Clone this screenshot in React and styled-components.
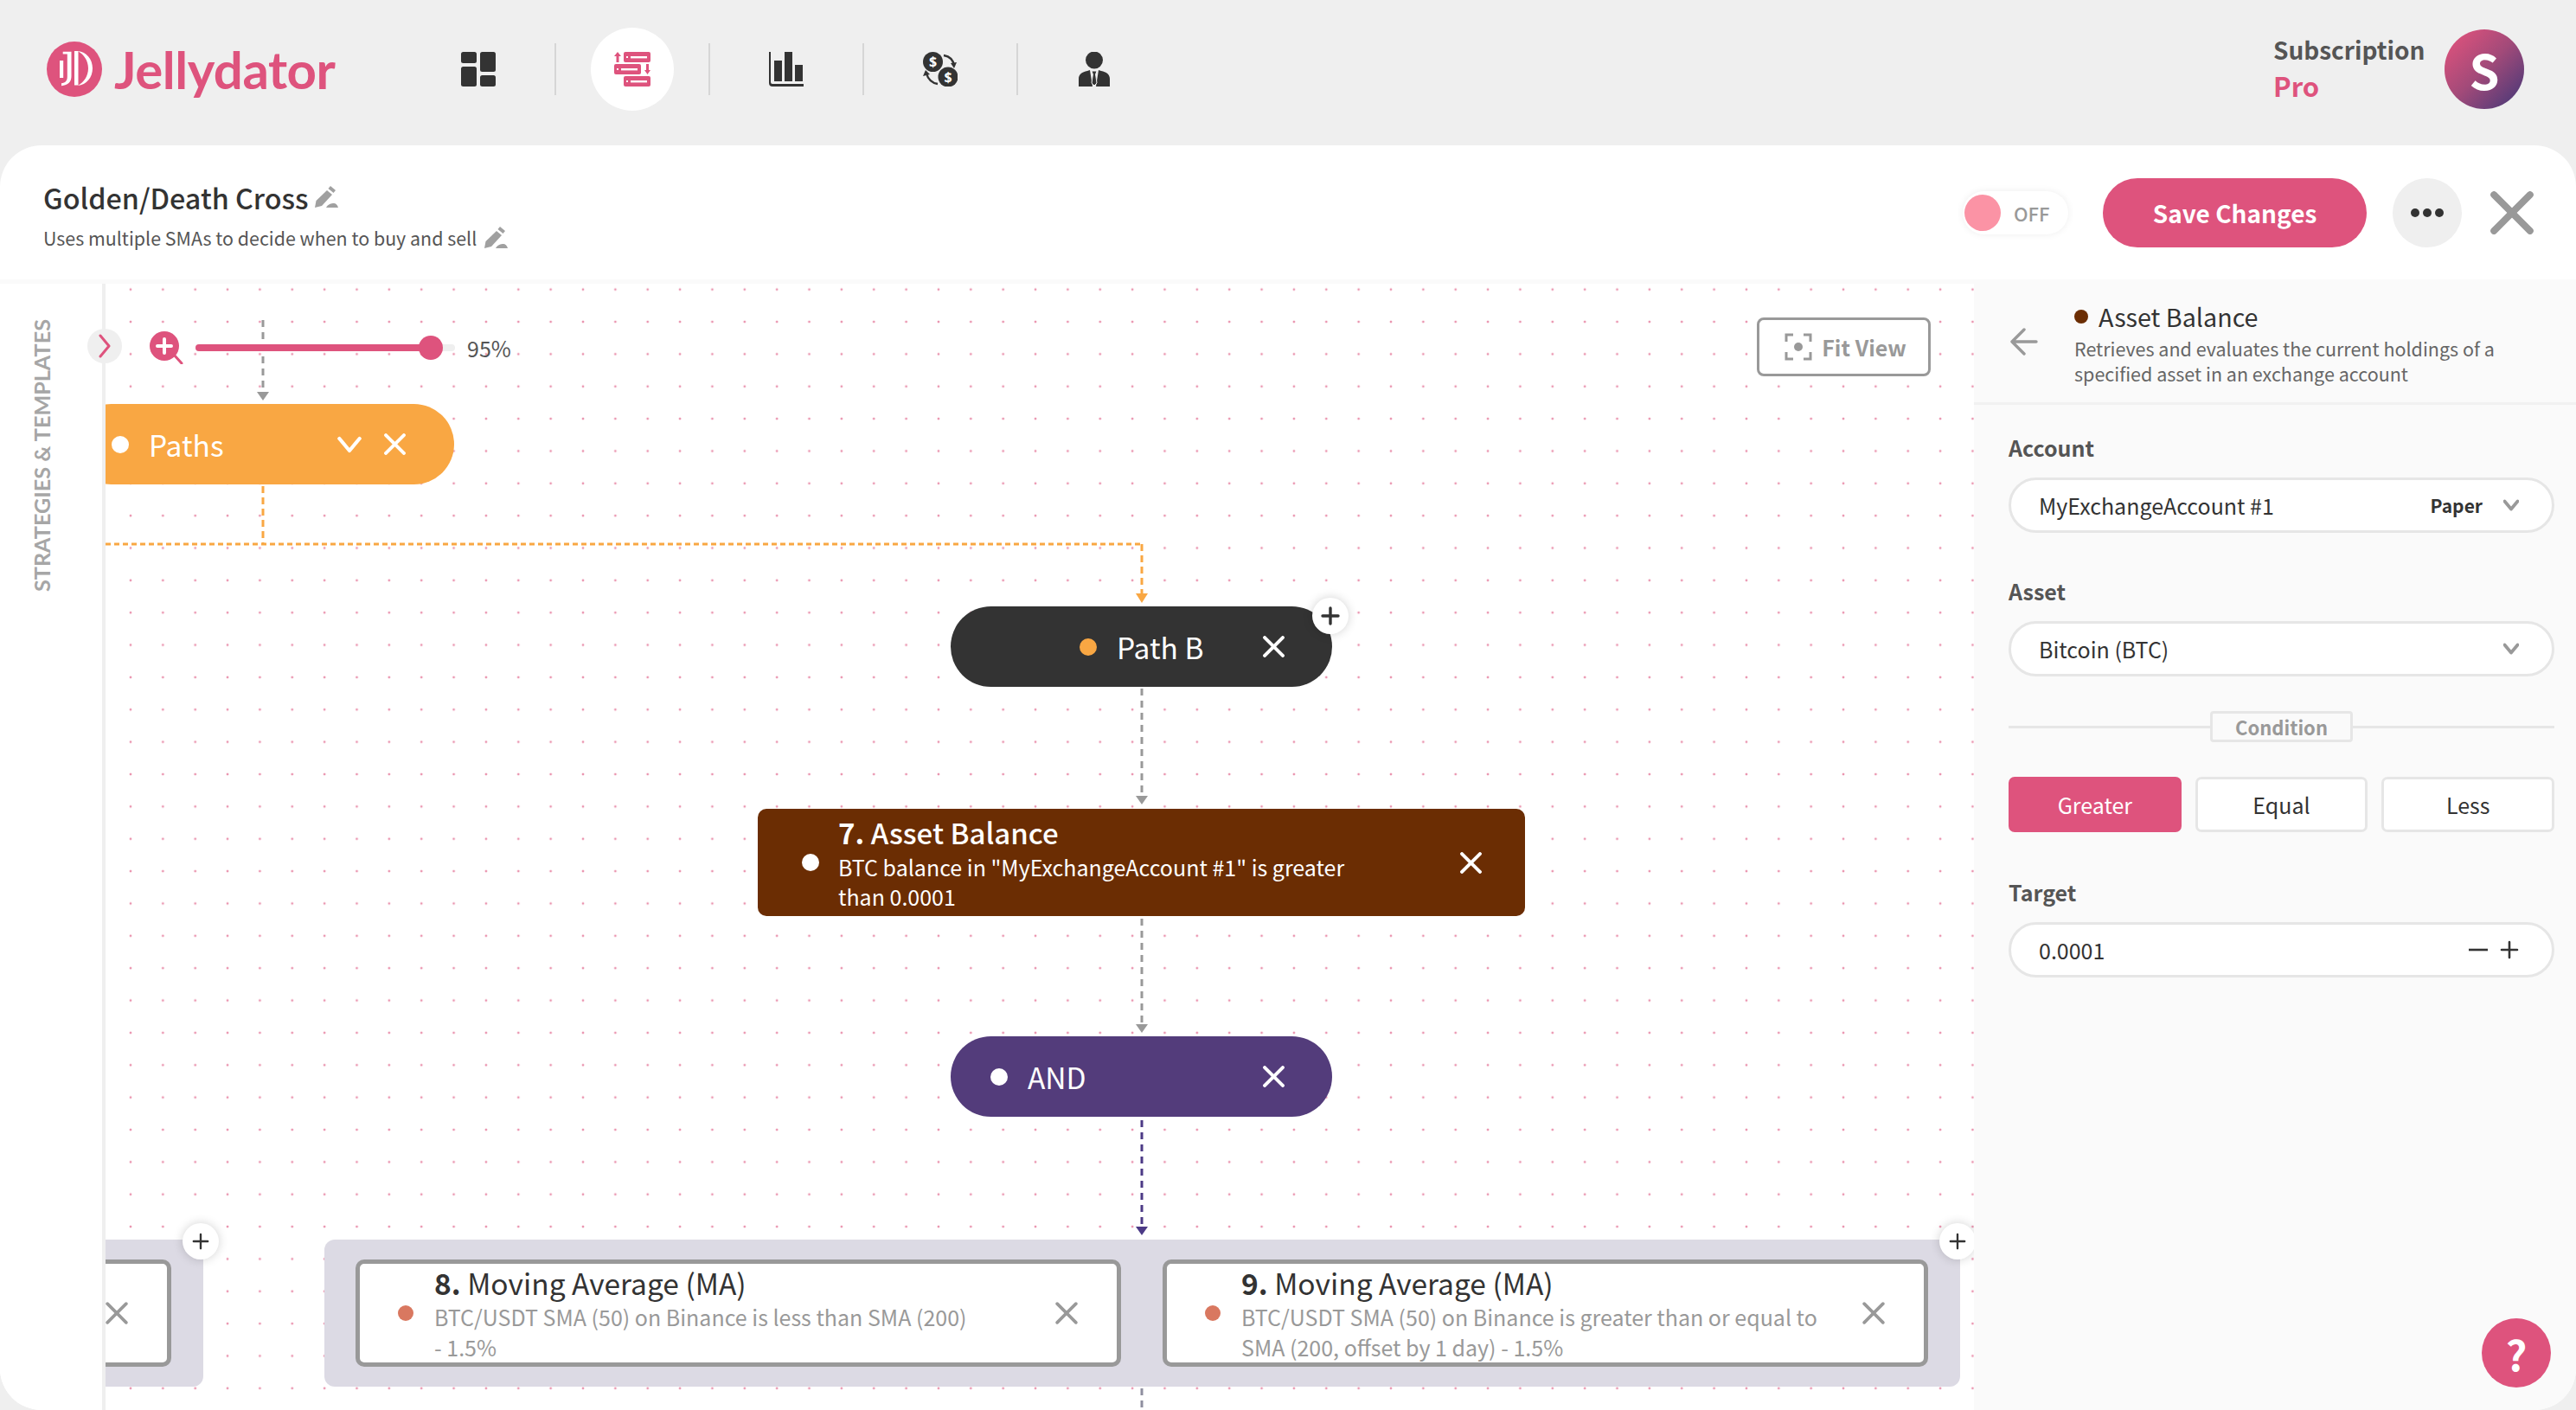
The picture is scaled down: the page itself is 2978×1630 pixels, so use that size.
import React from "react";
import styled, { createGlobalStyle } from "styled-components";

const PINK = "#de537d";
const FONT = `"Noto Sans CJK SC", "Noto Sans", sans-serif`;

const GlobalStyle = createGlobalStyle`
  html, body { margin: 0; padding: 0; width: 2978px; height: 1630px; overflow: hidden; background: #efefef; }
  body { font-family: ${FONT}; color: #333; }
  * { box-sizing: border-box; }
`;

const Page = styled.div`
  width: 2978px; height: 1630px; display: flex; flex-direction: column;
`;

/* ---------- top bar ---------- */
const TopBar = styled.header`
  height: 168px; flex: none; display: flex; align-items: center; padding: 0 60px 8px 54px;
`;
const Brand = styled.div`
  width: 411px; flex: none; display: flex; align-items: center; gap: 14px;
`;
const BrandName = styled.span`
  font-family: Lato, sans-serif; font-size: 60px; font-weight: 700; line-height: 64px; color: ${PINK}; letter-spacing: -0.5px;
`;
const Nav = styled.nav`
  display: flex; align-items: center;
`;
const NavItem = styled.div`
  width: 176px; height: 96px; display: flex; align-items: center; justify-content: center; position: relative;
  &::before {
    content: ""; display: ${(p) => (p.$active ? "block" : "none")};
    position: absolute; left: 40px; top: 0; width: 96px; height: 96px; border-radius: 50%; background: #fff;
  }
  svg { position: relative; display: block; }
`;
const NavDivider = styled.div`
  width: 2px; height: 60px; background: #d6d6d6; flex: none;
`;
const Spacer = styled.div`flex: 1;`;
const Plan = styled.div`
  display: flex; flex-direction: column; margin-right: 23px; width: 175px; padding-bottom: 4px;
`;
const PlanLabel = styled.span`
  font-size: 28px; line-height: 41px; font-weight: 600; color: #555; white-space: nowrap;
`;
const PlanValue = styled.span`
  font-size: 31px; line-height: 41px; font-weight: 600; color: ${PINK};
`;
const Avatar = styled.div`
  width: 92px; height: 92px; border-radius: 50%; display: flex; align-items: center; justify-content: center;
  background: linear-gradient(135deg, #dd527c 8%, #a24a79 50%, #4f3a78 92%);
  color: #fff; font-size: 56px; font-weight: 700; line-height: 1;
`;

/* ---------- panel ---------- */
const Panel = styled.main`
  flex: 1; min-height: 0; background: #fff; border-radius: 48px; overflow: hidden; display: flex; flex-direction: column; position: relative;
`;
const PanelHeader = styled.div`
  height: 160px; flex: none; display: flex; align-items: center; justify-content: space-between;
  padding: 0 49px 0 50px; border-bottom: 5px solid #fafafa;
`;
const TitleBlock = styled.div`
  display: flex; flex-direction: column; gap: 4px; margin-top: 4px;
`;
const StrategyName = styled.div`
  display: flex; align-items: center; gap: 6px; font-size: 32.3px; line-height: 50px; font-weight: 500; color: #333;
`;
const StrategyDesc = styled.div`
  display: flex; align-items: center; gap: 8px; font-size: 21.4px; line-height: 36px; color: #555;
`;
const Actions = styled.div`
  display: flex; align-items: center;
`;
const Toggle = styled.div`
  width: 122px; height: 50px; border-radius: 25px; background: #fff; box-shadow: 0 0 8px rgba(0,0,0,.07);
  display: flex; align-items: center; gap: 15px; padding-left: 2px; margin-right: 40px;
`;
const ToggleKnob = styled.div`
  width: 42px; height: 42px; border-radius: 50%; background: #fb93a5;
`;
const ToggleText = styled.span`
  font-size: 22px; font-weight: 500; color: #999;
`;
const SaveButton = styled.button`
  width: 305px; height: 80px; border: 0; border-radius: 40px; background: ${PINK}; color: #fff;
  font-family: ${FONT}; font-size: 28px; font-weight: 700; margin-right: 30px; padding: 0;
`;
const MoreButton = styled.button`
  width: 80px; height: 80px; border: 0; border-radius: 50%; background: #efefef; display: flex; align-items: center; justify-content: center; gap: 4px; margin-right: 33px; padding: 0;
`;
const MoreDot = styled.span`
  width: 10px; height: 10px; border-radius: 50%; background: #333;
`;

const Workspace = styled.div`
  flex: 1; min-height: 0; display: flex;
`;

/* ---------- left rail ---------- */
const Rail = styled.aside`
  width: 122px; flex: none; position: relative; z-index: 3; background: #fff; border-right: 4px solid #efefef;
  padding: 41px 0 0 33px;
`;
const RailLabel = styled.div`
  writing-mode: vertical-rl; transform: rotate(180deg); font-family: Lato, sans-serif; font-size: 25.2px; line-height: 30px; font-weight: 700; color: #a6a6a6; white-space: nowrap;
`;
const CollapseButton = styled.div`
  position: absolute; right: -23px; top: 52px; width: 40px; height: 40px; border-radius: 50%; background: #efefef;
  display: flex; align-items: center; justify-content: center;
`;

/* ---------- canvas ---------- */
const Canvas = styled.section`
  flex: 1; min-width: 0; position: relative; overflow: hidden; background-color: #fff;
  background-image: radial-gradient(circle, #ea93ae 1.1px, transparent 1.7px);
  background-size: 37.36px 37.36px; background-position: 10.3px 25.3px;
`;
const Edges = styled.svg`
  position: absolute; left: 0; top: 0; width: 100%; height: 100%; pointer-events: none;
`;
const ZoomBar = styled.div`
  position: absolute; left: 51px; top: 55px; display: flex; align-items: center; z-index: 2; height: 38px;
`;
const Track = styled.div`
  width: 300px; height: 8px; border-radius: 4px; background: #efefef; margin-left: 14px; position: relative;
`;
const TrackFill = styled.div`
  height: 100%; border-radius: 4px; background: ${PINK};
`;
const Thumb = styled.div`
  position: absolute; top: -10px; width: 28px; height: 28px; margin-left: -14px; border-radius: 50%; background: ${PINK};
`;
const ZoomValue = styled.span`
  font-size: 25px; line-height: 38px; color: #555; margin-left: 14px;
`;
const FitView = styled.button`
  position: absolute; left: 1909px; top: 39px; width: 201px; height: 68px; background: #fff; border: 3px solid #999; border-radius: 8px;
  display: flex; align-items: center; justify-content: center; gap: 11px; padding: 0 0 0 4px;
  font-family: ${FONT}; font-size: 25px; font-weight: 600; color: #999;
`;
const Pill = styled.div`
  position: absolute; left: ${(p) => p.$x}px; top: ${(p) => p.$y}px; width: ${(p) => p.$w || 441}px; height: 93px;
  border-radius: 47px; background: ${(p) => p.$bg}; display: flex; align-items: center; padding: 0 55px 0 ${(p) => p.$indent}px;
  color: #fff; font-size: 33.5px; line-height: 46px;
`;
const Dot = styled.span`
  width: ${(p) => p.$size || 20}px; height: ${(p) => p.$size || 20}px; border-radius: 50%; flex: none; background: ${(p) => p.$color || "#fff"};
`;
const PillLabel = styled.span`
  margin-left: 23px; flex: 1; white-space: nowrap;
`;
const PillActions = styled.div`
  display: flex; align-items: center; gap: 26px;
  margin-right: 1px;
`;
const BlockNode = styled.div`
  position: absolute; left: 754px; top: 607px; width: 887px; height: 124px; border-radius: 10px; background: #6b2d03;
  display: flex; align-items: center; padding: 0 50px 0 51px; color: #fff;
`;
const NodeText = styled.div`
  flex: 1; margin-left: ${(p) => p.$gap}px; align-self: flex-start; margin-top: ${(p) => p.$pad}px; white-space: nowrap;
`;
const NodeTitle = styled.div`
  font-size: ${(p) => p.$size}px; line-height: 45px; font-weight: ${(p) => p.$weight}; color: ${(p) => p.$color || "inherit"};
  b { font-weight: 700; }
`;
const NodeDesc = styled.div`
  font-size: 25px; line-height: ${(p) => p.$lh}px; color: ${(p) => p.$color || "inherit"};
`;
const Group = styled.div`
  position: absolute; left: ${(p) => p.$x}px; top: 1105px; width: ${(p) => p.$w}px; height: 170px; background: #dcdae4; border-radius: 12px;
  display: flex; gap: 48px; padding: 23px 36px;
`;
const ConditionNode = styled.div`
  width: 885px; height: 124px; flex: none; background: #fff; border: 5px solid #999; border-radius: 10px;
  display: flex; align-items: center; justify-content: ${(p) => (p.$clipped ? "flex-end" : "flex-start")}; padding: 0 45px 0 44px;
`;
const AddButton = styled.div`
  position: absolute; left: ${(p) => p.$x}px; top: ${(p) => p.$y}px; width: 42px; height: 42px; border-radius: 50%; background: #fff;
  box-shadow: 0 0 12px rgba(0,0,0,.18); display: flex; align-items: center; justify-content: center; z-index: 2;
`;

/* ---------- sidebar ---------- */
const Sidebar = styled.aside`
  width: 696px; flex: none; background: #fafafa; position: relative; z-index: 2; display: flex; flex-direction: column;
`;
const SideHeader = styled.div`
  height: 140px; flex: none; border-bottom: 3px solid #f1f1f1; display: flex; align-items: center; padding: 0 25px 4px 42px; gap: 42px;
`;
const SideHeaderText = styled.div`
  display: flex; flex-direction: column;
`;
const SideTitle = styled.div`
  display: flex; align-items: center; gap: 12px; font-size: 28.7px; line-height: 44px; color: #333;
`;
const SideDesc = styled.div`
  font-size: 21.5px; line-height: 29px; color: #666; white-space: nowrap;
`;
const Form = styled.div`
  display: flex; flex-direction: column; padding: 31px 25px 0 40px;
`;
const FieldLabel = styled.div`
  font-size: 25px; line-height: 36px; font-weight: 600; color: #555; margin-top: ${(p) => p.$top || 0}px;
`;
const Select = styled.div`
  height: 64px; margin-top: 17px; border: 3px solid #e6e6e6; border-radius: 32px; background: #fff; display: flex; align-items: center;
  padding: 0 38px 0 32px; font-size: 25px; color: #333;
`;
const SelectValue = styled.span`flex: 1;`;
const SelectTag = styled.span`
  font-size: 21px; font-weight: 700; color: #333; margin-right: 24px;
`;
const StepIcons = styled.div`
  display: flex; align-items: center; gap: 14px;
`;
const Rule = styled.div`
  display: flex; align-items: center; margin-top: 40px;
  &::before, &::after { content: ""; flex: 1; height: 3px; background: #e6e6e6; }
`;
const RuleLabel = styled.span`
  width: 165px; height: 36px; border: 3px solid #e6e6e6; border-radius: 4px; display: flex; align-items: center; justify-content: center;
  font-size: 22px; font-weight: 600; color: #999;
`;
const Segments = styled.div`
  display: grid; grid-template-columns: repeat(3, 1fr); gap: 16px; margin-top: 40px;
`;
const Segment = styled.button`
  height: 64px; border-radius: 7px; padding: 0; font-family: ${FONT}; font-size: 25px;
  background: ${(p) => (p.$active ? PINK : "#fff")}; color: ${(p) => (p.$active ? "#fff" : "#333")};
  border: 3px solid ${(p) => (p.$active ? PINK : "#e6e6e6")};
`;
const HelpButton = styled.div`
  position: absolute; right: 29px; bottom: 26px; width: 80px; height: 80px; border-radius: 50%; background: ${PINK}; z-index: 4;
  display: flex; align-items: center; justify-content: center; color: #fff; font-size: 48px; font-weight: 700; line-height: 1;
`;

/* ---------- drawings ---------- */
const Logo = () => (
  <svg width="64" height="64" viewBox="0 0 64 64">
    <circle cx="32" cy="32" r="32" fill={PINK} />
    <path d="M18.7 11.8h9.8V40c0 6.5-3.5 10.5-11.5 11.2v-3c4.6-.5 6.8-3 6.8-7.8V14.6h-5.1z" fill="#fff" />
    <path d="M15 22h4.2v20H15z" fill="#fff" />
    <path d="M32 11h4.500v39.500H32z" fill="#fff" />
    <path d="M36 11c10 1 17 9.500 17 20s-7 19-17 20c7-4 12-11 12-20s-5-16-12-20z" fill="#fff" />
  </svg>
);
const DashIcon = () => (
  <svg width="40" height="40" viewBox="0 0 40 40" fill="#333">
    <rect x="0" y="0" width="18" height="13" rx="2.5" />
    <rect x="0" y="17" width="18" height="23" rx="2.5" />
    <rect x="22" y="0" width="18" height="23" rx="2.5" />
    <rect x="22" y="27" width="18" height="13" rx="2.5" />
  </svg>
);
const StrategyIcon = () => (
  <svg width="42" height="40" viewBox="0 0 42 40">
    <g fill={PINK}>
      <rect x="11" y="0" width="31" height="12" rx="2" />
      <rect x="0" y="14" width="31" height="12" rx="2" />
      <rect x="11" y="28" width="31" height="12" rx="2" />
      <path d="M4 0l4 5H5.500v7h-3V5H0zM37 14h3v7h2l-3.500 5-3.500-5h2z" />
    </g>
    <g fill="#fff">
      <rect x="14" y="5" width="2" height="2" /><rect x="19" y="5" width="19" height="2.400" />
      <rect x="3" y="19" width="2" height="2" /><rect x="8" y="19" width="19" height="2.400" />
      <rect x="14" y="33" width="2" height="2" /><rect x="19" y="33" width="19" height="2.400" />
    </g>
  </svg>
);
const ChartIcon = () => (
  <svg width="40" height="40" viewBox="0 0 40 40" fill="#333">
    <path d="M0 0h2v35a2 2 0 0 0 2 2h36v3H4a4 4 0 0 1-4-4z" />
    <rect x="6" y="10" width="9" height="24" />
    <rect x="18" y="0" width="9" height="34" />
    <rect x="30" y="15" width="9" height="19" />
  </svg>
);
const MoneyIcon = () => (
  <svg width="40" height="40" viewBox="0 0 40 40">
    <circle cx="11.500" cy="11.500" r="11.500" fill="#333" />
    <circle cx="29" cy="29" r="11.500" fill="#333" />
    <text x="11.500" y="17" textAnchor="middle" fontSize="16" fontWeight="700" fill="#fff" fontFamily="Noto Sans">$</text>
    <text x="29" y="34.500" textAnchor="middle" fontSize="16" fontWeight="700" fill="#fff" fontFamily="Noto Sans">$</text>
    <path d="M24 4c6 1 11 5 12 12" fill="none" stroke="#333" strokeWidth="2.400" />
    <path d="M32 13l4 6 3-7z" fill="#333" />
    <path d="M17 37C11 36 6 32 4 25" fill="none" stroke="#333" strokeWidth="2.400" />
    <path d="M0 28l3-7 5 5z" fill="#333" />
  </svg>
);
const PersonIcon = () => (
  <svg width="36" height="40" viewBox="0 0 36 40">
    <ellipse cx="18" cy="9.500" rx="10" ry="10" fill="#333" />
    <path d="M0 40v-9c0-5 4-8 10-9l3-1 3 19zM36 40v-9c0-5-4-8-10-9l-3-1-3 19z" fill="#333" />
    <path d="M15 22h6l-1.400 4 1.400 10-3 3-3-3 1.400-10z" fill="#333" stroke="#efefef" strokeWidth="1" />
  </svg>
);
const Pencil = ({ size }) => (
  <svg width={size} height={size} viewBox="0 0 28 28" fill="#a0a0a0">
    <path d="M19 1l6 5-2.500 3-6-5z" />
    <path d="M15 6l6 5L9 24l-8 2 1.500-8z" />
    <path d="M14 26c2-4 6-5 9-5 2 0 4 1.500 5 5z" />
  </svg>
);
const Cross = ({ size = 24, color = "#fff", weight = 3.800 }) => (
  <svg width={size} height={size} viewBox="0 0 24 24" fill="none" stroke={color} strokeWidth={weight} strokeLinecap="round" style={{ flex: "none" }}>
    <path d="M2 2l20 20M22 2L2 22" />
  </svg>
);
const Chevron = ({ size = 24, color = "#fff", weight = 3.600 }) => (
  <svg width={size} height={size} viewBox="0 0 24 24" fill="none" stroke={color} strokeWidth={weight} strokeLinecap="round" strokeLinejoin="round" style={{ flex: "none" }}>
    <path d="M2 6l10 12L22 6" />
  </svg>
);
const ChevronRightIcon = () => (
  <svg width="16" height="28" viewBox="0 0 16 28" fill="none" stroke={PINK} strokeWidth="3" strokeLinecap="round" strokeLinejoin="round">
    <path d="M3 2l10 12L3 26" />
  </svg>
);
const PlusIcon = ({ size = 22, color = "#333", weight = 3.400 }) => (
  <svg width={size} height={size} viewBox="0 0 22 22" fill="none" stroke={color} strokeWidth={weight} strokeLinecap="round">
    <path d="M11 2v18M2 11h18" />
  </svg>
);
const MinusIcon = () => (
  <svg width="22" height="22" viewBox="0 0 22 22" fill="none" stroke="#333" strokeWidth="2.600">
    <path d="M0 11h22" />
  </svg>
);
const BackArrow = () => (
  <svg width="32" height="32" viewBox="0 0 32 32" fill="none" stroke="#999" strokeWidth="3.400" strokeLinecap="round" strokeLinejoin="round" style={{ flex: "none" }}>
    <path d="M30 16H3M16 2L2 16l14 14" />
  </svg>
);
const ZoomIcon = () => (
  <svg width="39" height="38" viewBox="0 0 39 38" style={{ flex: "none" }}>
    <circle cx="17" cy="17" r="17" fill={PINK} />
    <path d="M17 9v16M9 17h16" stroke="#fff" strokeWidth="4" strokeLinecap="round" />
    <path d="M28 27l9 10" stroke={PINK} strokeWidth="3" strokeLinecap="round" />
  </svg>
);
const FitIcon = () => (
  <svg width="32" height="32" viewBox="0 0 32 32" fill="none" stroke="#999" strokeWidth="3">
    <path d="M2 10V2h8M22 2h8v8M30 22v8h-8M10 30H2v-8" />
    <circle cx="16" cy="16" r="5" fill="#999" stroke="none" />
  </svg>
);

const Edge = ({ d, tip, color }) => (
  <g>
    <path d={d} fill="none" stroke={color} strokeWidth="3" strokeDasharray="8 6" />
    <path d={`M${tip[0] - 7} ${tip[1]}h14l-7 10z`} fill={color} />
  </g>
);

const Condition = ({ n, lines }) => (
  <ConditionNode>
    <Dot $size={18} $color="#d97860" />
    <NodeText $pad={-1} $gap={24}>
      <NodeTitle $color="#333" $size={33.5} $weight={400}><b>{n}.</b> Moving Average (MA)</NodeTitle>
      <NodeDesc $color="#999" $lh={35}>{lines[0]}<br />{lines[1]}</NodeDesc>
    </NodeText>
    <Cross color="#999" size={26} weight={3.400} />
  </ConditionNode>
);

const NAV = [DashIcon, StrategyIcon, ChartIcon, MoneyIcon, PersonIcon];

export default function App() {
  const zoom = 90.6;
  return (
    <Page>
      <GlobalStyle />
      <TopBar>
        <Brand>
          <Logo />
          <BrandName>Jellydator</BrandName>
        </Brand>
        <Nav>
          {NAV.map((Icon, i) => (
            <React.Fragment key={i}>
              <NavItem $active={i === 1}><Icon /></NavItem>
              {i < NAV.length - 1 && <NavDivider />}
            </React.Fragment>
          ))}
        </Nav>
        <Spacer />
        <Plan>
          <PlanLabel>Subscription</PlanLabel>
          <PlanValue>Pro</PlanValue>
        </Plan>
        <Avatar>S</Avatar>
      </TopBar>

      <Panel>
        <PanelHeader>
          <TitleBlock>
            <StrategyName>Golden/Death Cross <Pencil size={28} /></StrategyName>
            <StrategyDesc>Uses multiple SMAs to decide when to buy and sell <Pencil size={28} /></StrategyDesc>
          </TitleBlock>
          <Actions>
            <Toggle><ToggleKnob /><ToggleText>OFF</ToggleText></Toggle>
            <SaveButton>Save Changes</SaveButton>
            <MoreButton><MoreDot /><MoreDot /><MoreDot /></MoreButton>
            <Cross size={50} color="#999" weight={3.800} />
          </Actions>
        </PanelHeader>

        <Workspace>
          <Rail>
            <RailLabel>STRATEGIES &amp; TEMPLATES</RailLabel>
            <CollapseButton><ChevronRightIcon /></CollapseButton>
          </Rail>

          <Canvas>
            <Edges>
              <Edge color="#999" d="M182 42V125" tip={[182, 125]} />
              <path d="M182 234V301" fill="none" stroke="#f9a743" strokeWidth="3" strokeDasharray="8 5" />
              <path d="M0 301H1198" fill="none" stroke="#f9a743" strokeWidth="3" strokeDasharray="6 4" />
              <path d="M1198 301V358" fill="none" stroke="#f9a743" strokeWidth="3" strokeDasharray="8 5" />
              <path d="M1191 358h14l-7 11z" fill="#f9a743" />
              <Edge color="#999" d="M1198 468V592" tip={[1198, 592]} />
              <Edge color="#999" d="M1198 734V856" tip={[1198, 856]} />
              <Edge color="#4c3a86" d="M1198 967V1090" tip={[1198, 1090]} />
              <path d="M1198 1277V1302" fill="none" stroke="#8f8f9f" strokeWidth="3" strokeDasharray="8 6" />
            </Edges>

            <ZoomBar>
              <ZoomIcon />
              <Track>
                <TrackFill style={{ width: `${zoom}%` }} />
                <Thumb style={{ left: `${zoom}%` }} />
              </Track>
              <ZoomValue>95%</ZoomValue>
            </ZoomBar>
            <FitView><FitIcon />Fit View</FitView>

            <Pill $x={-40} $y={139} $w={443} $bg="#f9a743" $indent={47}>
              <Dot />
              <PillLabel>Paths</PillLabel>
              <PillActions><Chevron size={28} /><Cross size={25} /></PillActions>
            </Pill>

            <Pill $x={977} $y={373} $bg="#333" $indent={149}>
              <Dot $color="#f9a743" />
              <PillLabel>Path B</PillLabel>
              <Cross size={25} />
            </Pill>
            <AddButton $x={1395} $y={363}><PlusIcon /></AddButton>

            <BlockNode>
              <Dot />
              <NodeText $pad={5} $gap={22}>
                <NodeTitle $size={33} $weight={500}><b>7.</b> Asset Balance</NodeTitle>
                <NodeDesc $lh={34}>BTC balance in "MyExchangeAccount #1" is greater<br />than 0.0001</NodeDesc>
              </NodeText>
              <Cross size={25} />
            </BlockNode>

            <Pill $x={977} $y={870} $bg="#533c7b" $indent={46}>
              <Dot />
              <PillLabel>AND</PillLabel>
              <Cross size={25} />
            </Pill>

            <Group $x={-845} $w={958}>
              <ConditionNode $clipped><Cross color="#999" size={26} weight={3.400} /></ConditionNode>
            </Group>
            <AddButton $x={89} $y={1086}><PlusIcon size={20} weight={2.600} /></AddButton>

            <Group $x={253} $w={1891}>
              <Condition n={8} lines={["BTC/USDT SMA (50) on Binance is less than SMA (200)", "- 1.5%"]} />
              <Condition n={9} lines={["BTC/USDT SMA (50) on Binance is greater than or equal to", "SMA (200, offset by 1 day) - 1.5%"]} />
            </Group>
            <AddButton $x={2120} $y={1086}><PlusIcon size={20} weight={2.600} /></AddButton>
          </Canvas>

          <Sidebar>
            <SideHeader>
              <BackArrow />
              <SideHeaderText>
                <SideTitle><Dot $size={16} $color="#6b2d03" />Asset Balance</SideTitle>
                <SideDesc>Retrieves and evaluates the current holdings of a<br />specified asset in an exchange account</SideDesc>
              </SideHeaderText>
            </SideHeader>
            <Form>
              <FieldLabel>Account</FieldLabel>
              <Select>
                <SelectValue>MyExchangeAccount #1</SelectValue>
                <SelectTag>Paper</SelectTag>
                <Chevron size={18} color="#999" weight={5} />
              </Select>
              <FieldLabel $top={49}>Asset</FieldLabel>
              <Select>
                <SelectValue>Bitcoin (BTC)</SelectValue>
                <Chevron size={18} color="#999" weight={5} />
              </Select>
              <Rule><RuleLabel>Condition</RuleLabel></Rule>
              <Segments>
                <Segment $active>Greater</Segment>
                <Segment>Equal</Segment>
                <Segment>Less</Segment>
              </Segments>
              <FieldLabel $top={51}>Target</FieldLabel>
              <Select>
                <SelectValue>0.0001</SelectValue>
                <StepIcons><MinusIcon /><PlusIcon size={22} weight={2.600} /></StepIcons>
              </Select>
            </Form>
          </Sidebar>
        </Workspace>
        <HelpButton>?</HelpButton>
      </Panel>
    </Page>
  );
}
